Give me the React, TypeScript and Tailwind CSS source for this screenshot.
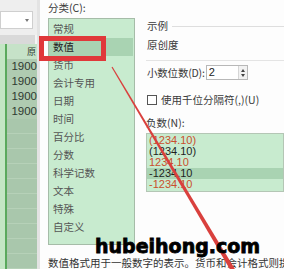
const categories = ["常规", "数值", "货币", "会计专用", "日期", "时间", "百分比", "分数", "科学记数", "文本", "特殊", "自定义"];

const negatives = [
  { text: "(1234.10)", red: true, selected: false },
  { text: "(1234.10)", red: false, selected: false },
  { text: "1234.10", red: true, selected: false },
  { text: "-1234.10", red: false, selected: true },
  { text: "-1234.10", red: true, selected: false },
];

function SheetStrip() {
  return (
    <div className="flex w-[37px] shrink-0 flex-col overflow-hidden bg-[#eeeeee]">
      <div className="h-[13px]" />
      {/* name box */}
      <div className="relative h-[20px] w-[33px] border border-[#cfcfcf] bg-white">
        <span className="absolute right-[3px] top-[7px] h-0 w-0 border-x-[2px] border-t-[3px] border-x-transparent border-t-[#777]" />
      </div>
      <div className="h-[7px]" />
      {/* column header */}
      <div className="h-[10px] border-r-2 border-[#f4f4f4] bg-[#d9d9d9]" />
      {/* cells */}
      <div className="flex flex-1">
        <div className="w-[5px] bg-[#c3e6c4]" />
        <div className="w-[2px] bg-[#5aa95d]" />
        <div className="flex flex-1 flex-col font-['Liberation_Sans',sans-serif] text-[11.5px] leading-[15px] text-[#2e3a30]">
          <div className="flex h-[15px] justify-end bg-[#c6e2c8] pr-[1px] font-['Noto_Sans_CJK_SC',sans-serif] text-[9px]">
            <span>原</span>
          </div>
          {[0, 1, 2, 3].map((i) => (
            <div key={i} className="h-[15px] bg-[#afcbb1] text-right">
              1900
            </div>
          ))}
          {Array.from({ length: 10 }).map((_, i) => (
            <div key={i} className="h-[15px] border-b border-[#b6d1b8] bg-[#a9c7ac]" />
          ))}
        </div>
      </div>
    </div>
  );
}

export default function App() {
  return (
    <div className="relative flex h-[269px] w-[284px] overflow-hidden bg-white font-['Noto_Sans_CJK_SC',sans-serif] text-[10.5px] text-[#3a3a3a]">
      <SheetStrip />
      <div className="w-[3px] shrink-0 bg-[#e3e3e3]" />

      {/* dialog */}
      <div className="flex min-w-0 flex-1 flex-col bg-[#fdfdfd] pl-[8px]">
        <div className="flex">
          {/* category column */}
          <div className="flex w-[87px] shrink-0 flex-col">
            <div className="h-[18px] pt-[1px] leading-[14px]">分类(C):</div>
            <div className="h-[227px] border border-[#a6bca8] bg-[#c8ebcf] pt-[1px]">
              {categories.map((c) => (
                <div
                  key={c}
                  className={`h-[18px] pl-[4px] leading-[18px] ${c === "数值" ? "mr-[1px] bg-[#a9d3b2] text-[#222]" : "text-[#555]"}`}
                >
                  {c}
                </div>
              ))}
            </div>
          </div>

          {/* right column */}
          <div className="ml-[11px] flex min-w-0 flex-1 flex-col pt-[19px]">
            <div className="flex h-[14px] items-center gap-[4px] pl-[1px]">
              <span className="leading-[14px]">示例</span>
              <div className="h-px flex-1 bg-[#dedede]" />
            </div>
            <div className="mt-[5px] h-[14px] pl-[1px] leading-[14px]">原创度</div>
            <div className="mt-[8px] h-px bg-[#e4e4e4]" />

            <div className="mt-[4px] flex h-[15px] items-center pl-[1px]">
              <span className="leading-[14px] tracking-[-0.2px]">小数位数(D):</span>
              <div className="ml-[1px] flex h-[15px] w-[42px] items-center border border-[#b8b8b8] bg-white">
                <span className="flex-1 pl-[2px] font-['Liberation_Sans',sans-serif] text-[11px] leading-[13px] text-[#222]">2</span>
                <div className="flex h-full w-[9px] flex-col items-center justify-center gap-[2px] border-l border-[#d6d6d6] bg-[#f2f2f2]">
                  <span className="h-0 w-0 border-x-[2.5px] border-b-[3px] border-x-transparent border-b-[#444]" />
                  <span className="h-0 w-0 border-x-[2.5px] border-t-[3px] border-x-transparent border-t-[#444]" />
                </div>
              </div>
            </div>

            <div className="mt-[13px] flex h-[14px] items-center gap-[4px] pl-[1px]">
              <span className="h-[10px] w-[10px] border border-[#555] bg-white" />
              <span className="leading-[14px]">使用千位分隔符(,)(U)</span>
            </div>

            <div className="mt-[9px] h-[14px] leading-[14px]">负数(N):</div>
            <div className="mt-[3px] h-[59px] border border-[#b4c6b5] bg-[#c8ebcf] pt-[1px] font-['Liberation_Sans',sans-serif] text-[11px]">
              {negatives.map((n, i) => (
                <div
                  key={i}
                  className={`h-[11px] pl-[2px] leading-[11px] ${n.red ? "text-[#c8502e]" : "text-[#1f1f1f]"} ${n.selected ? "bg-[#a9d3b2]" : ""}`}
                >
                  {n.text}
                </div>
              ))}
            </div>
          </div>
        </div>

        <div className="mt-[11px] whitespace-nowrap leading-[14px] text-[#333]">
          数值格式用于一般数字的表示。货币和会计格式则提供货币值计算的专用格式。
        </div>
      </div>

      {/* red highlight box */}
      <div className="absolute left-[39px] top-[36px] h-[25px] w-[67px] border-[5px] border-[#e0383a]" />

      {/* red arrow */}
      <svg className="absolute left-0 top-0" width="284" height="269" viewBox="0 0 284 269">
        <polygon points="112.5,66.7 111.5,67.3 232.2,273.2 236,270.8" fill="#d9403d" />
      </svg>

      {/* watermark */}
      <div className="absolute left-[95px] top-[237px] font-['DejaVu_Sans',sans-serif] text-[19px] font-bold leading-none text-black [-webkit-text-stroke:0.8px_black]">
        hubeihong.com
      </div>
    </div>
  );
}
